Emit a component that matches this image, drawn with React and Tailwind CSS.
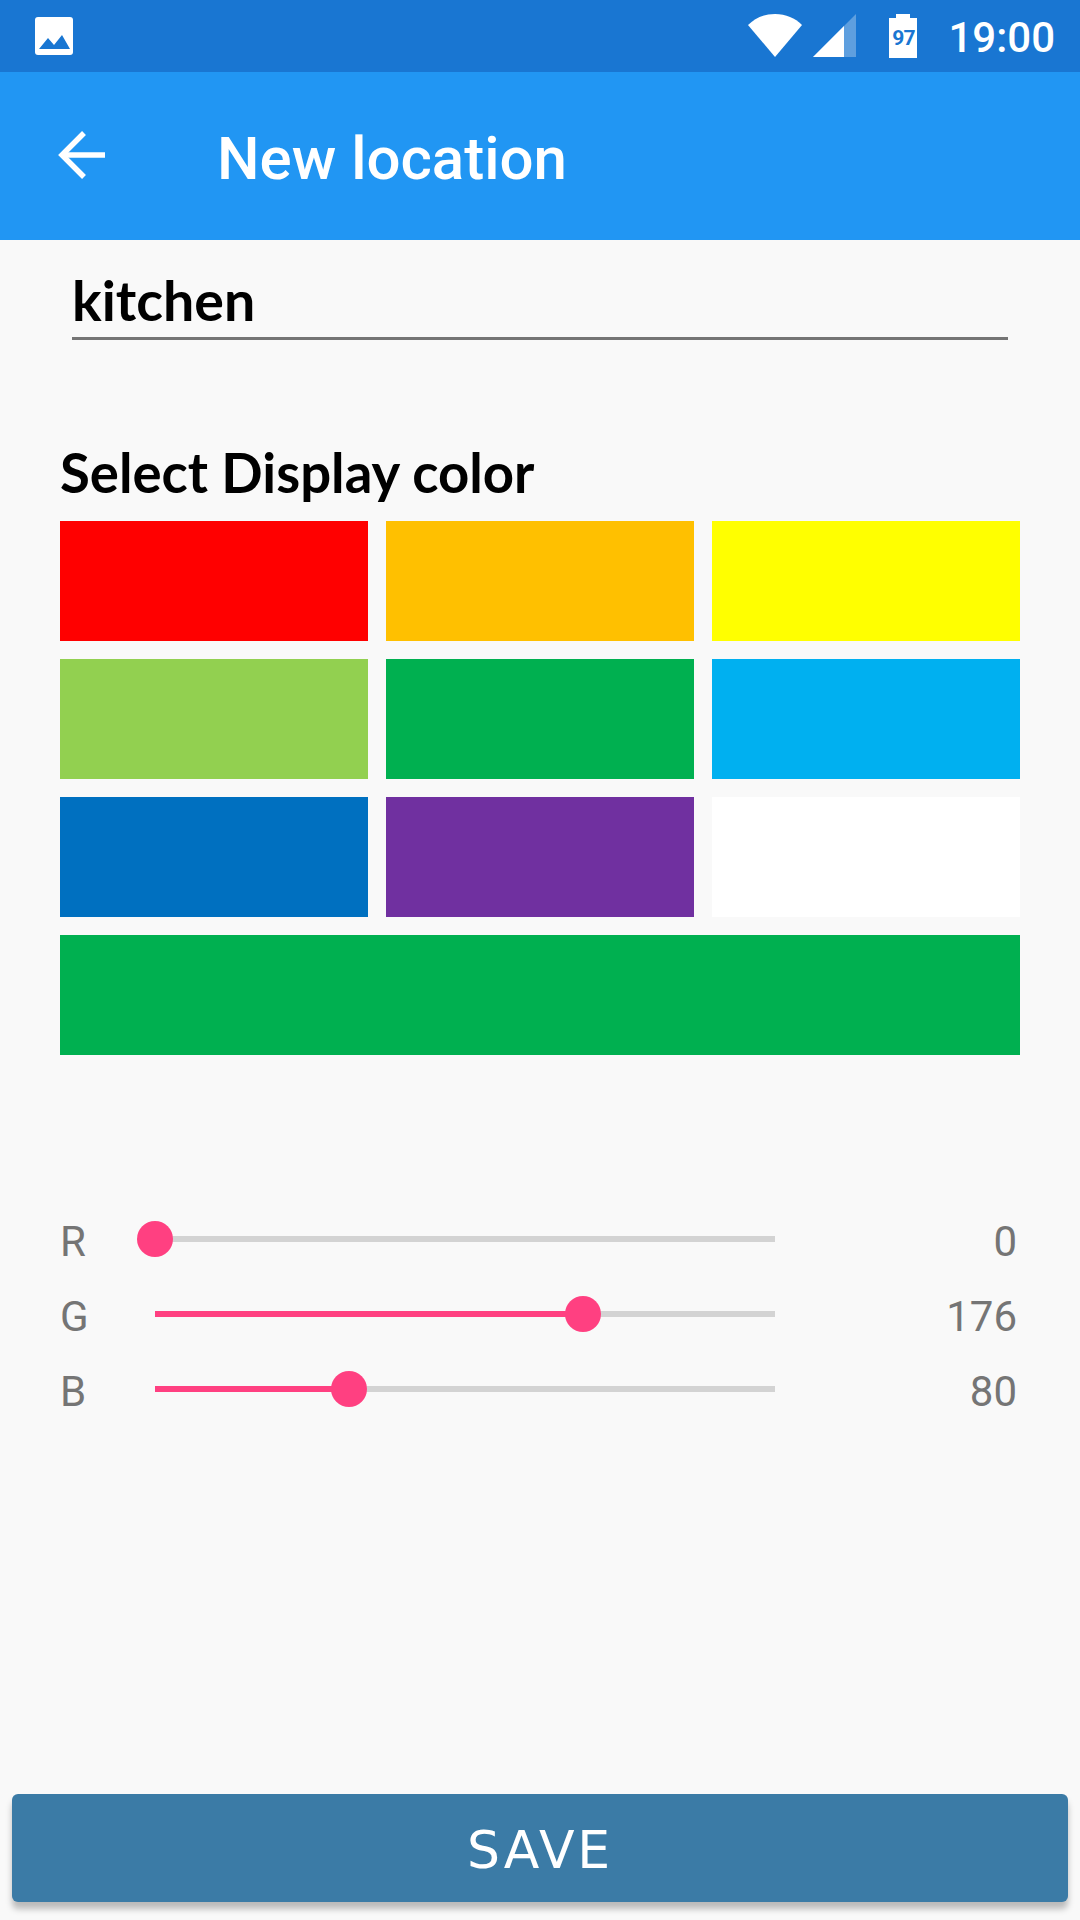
const roboto = { fontFamily: '"Roboto", sans-serif' };

const swatches = [
  "bg-[#ff0000]", "bg-[#ffc000]", "bg-[#ffff00]",
  "bg-[#92d050]", "bg-[#00b050]", "bg-[#00b0f0]",
  "bg-[#0070c0]", "bg-[#7030a0]", "bg-[#ffffff]",
];

const channels = [
  { label: "R", value: 0 },
  { label: "G", value: 176 },
  { label: "B", value: 80 },
];

function StatusBar() {
  return (
    <div className="flex h-[72px] items-center bg-[#1976d2] pl-[35px] pr-[25px] text-white">
      <svg width="38" height="38" viewBox="0 0 38 38">
        <path fill="#fff" d="M3 0h32a3 3 0 0 1 3 3v32a3 3 0 0 1-3 3H3a3 3 0 0 1-3-3V3a3 3 0 0 1 3-3z" />
        <path fill="#1976d2" d="M4 32l9-11 6 7 8-10 8 14z" />
      </svg>
      <div className="ml-auto flex items-center">
        <svg width="54" height="44" viewBox="0 0 54 44">
          <path fill="#fff" d="M0 11C7 4 16 0 27 0s20 4 27 11L27 43z" />
        </svg>
        <svg width="44" height="44" viewBox="0 0 44 44" className="ml-[11px]">
          <path fill="#fff" fillOpacity="0.3" d="M43 0v43H0z" />
          <path fill="#fff" d="M31 12v31H0z" />
        </svg>
        <div className="relative ml-[32px] h-[44px] w-[28px]">
          <svg width="28" height="44" viewBox="0 0 28 44" className="absolute inset-0">
            <path fill="#fff" d="M7 0h14v4h7v40H0V4h7z" />
          </svg>
          <span className="absolute inset-x-0 top-[13px] text-center text-[21px] font-bold leading-[22px] tracking-[-0.8px] text-[#1976d2]" style={roboto}>97</span>
        </div>
        <span className="ml-[31px] mt-[3px] text-[42px] font-medium leading-none" style={roboto}>19:00</span>
      </div>
    </div>
  );
}

function AppBar() {
  return (
    <div className="flex h-[168px] items-center bg-[#2196f3] text-white">
      <svg width="48" height="48" viewBox="0 0 48 48" className="ml-[58px] mt-[-2px]" fill="none" stroke="#fff" strokeWidth="5.5">
        <path d="M47 24H4" />
        <path d="M26 2L4 24l22 22" />
      </svg>
      <span className="ml-[111px] mt-[5px] text-[60px] font-medium leading-none" style={roboto}>New location</span>
    </div>
  );
}

function Slider({ label, value }) {
  const pct = (value / 255) * 100;
  return (
    <div className="flex h-[75px] items-center">
      <span className="w-[95px] pt-[6px] text-[42px] leading-none text-[#757575]" style={roboto}>{label}</span>
      <div className="relative h-[6px] w-[620px] bg-[#d3d3d3]">
        <div className="h-full bg-[#ff4081]" style={{ width: `${pct}%` }} />
        <div className="absolute top-[-15px] ml-[-18.2px] h-[36px] w-[36px] rounded-full bg-[#ff4081]" style={{ left: `${pct}%` }} />
      </div>
      <span className="ml-auto pr-[3px] pt-[6px] text-[42px] leading-none text-[#757575]" style={roboto}>{value}</span>
    </div>
  );
}

export default function App() {
  return (
    <div className="flex h-[1920px] w-[1080px] flex-col overflow-hidden bg-[#f9f9f9]" style={{ fontFamily: '"Lato", sans-serif' }}>
      <StatusBar />
      <AppBar />
      <div className="mx-[72px] mt-[24px] h-[76px] border-b-[3px] border-[#757575] text-[55.5px] font-bold leading-[72px] text-black">kitchen</div>
      <div className="mx-[60px] mt-[97px] text-[54.5px] font-bold leading-[70px] text-black">Select Display color</div>
      <div className="mx-[60px] mt-[14px] grid grid-cols-3 gap-[18px]">
        {swatches.map((c) => (
          <div key={c} className={`h-[120px] ${c}`} />
        ))}
        <div className="col-span-3 h-[120px] bg-[#00b050]" />
      </div>
      <div className="ml-[60px] mr-[60px] mt-[146px] flex flex-col">
        {channels.map((c) => (
          <Slider key={c.label} {...c} />
        ))}
      </div>
      <button className="mx-[12px] mb-[18px] mt-auto flex h-[108px] items-center justify-center rounded-[6px] bg-[#3b7ba6] pt-[4px] text-[52px] leading-none tracking-[2.8px] text-white shadow-[0_7px_6px_rgba(0,0,0,0.25)]" style={{ fontFamily: '"DejaVu Sans", sans-serif' }}>SAVE</button>
    </div>
  );
}
